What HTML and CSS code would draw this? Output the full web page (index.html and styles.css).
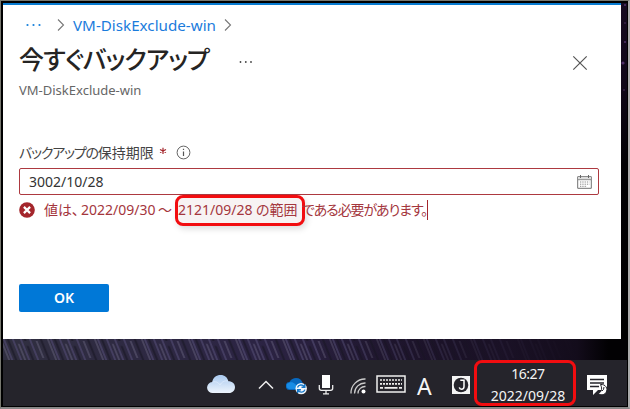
FILE: index.html
```html
<!DOCTYPE html>
<html lang="ja">
<head>
<meta charset="utf-8">
<title>今すぐバックアップ</title>
<link rel="stylesheet" href="styles.css">
</head>
<body>
<div class="screen">
  <div class="desktop">
    <main class="panel">
      <nav class="crumbs">
        <svg class="crumb-dots" width="16" height="4" viewBox="0 0 16 4"><g fill="#1680dc"><circle cx="1.5" cy="2" r="1.1"/><circle cx="7.5" cy="2" r="1.1"/><circle cx="13.5" cy="2" r="1.1"/></g></svg>
        <svg class="crumb-sep" width="8" height="14" viewBox="0 0 8 14"><path d="M1 1.5l5.5 5.5L1 12.5" fill="none" stroke="#777" stroke-width="1.1"/></svg>
        <a class="crumb-link">VM-DiskExclude-win</a>
        <svg width="8" height="14" viewBox="0 0 8 14"><path d="M1 1.5l5.5 5.5L1 12.5" fill="none" stroke="#777" stroke-width="1.1"/></svg>
      </nav>
      <header class="heading">
        <h1 class="title">今すぐバックアップ</h1>
        <svg class="more" width="14" height="4" viewBox="0 0 14 4"><g fill="#444"><circle cx="1.5" cy="2" r=".9"/><circle cx="6.8" cy="2" r=".9"/><circle cx="12" cy="2" r=".9"/></g></svg>
        <svg class="close" width="16" height="16" viewBox="0 0 16 16"><path d="M1.3 1.3l13.4 13.4M14.7 1.3L1.3 14.7" stroke="#555" stroke-width="1.2"/></svg>
      </header>
      <div class="subtitle">VM-DiskExclude-win</div>
      <div class="label">
        <span class="label-text"><span class="tight">バックアップの</span>保持期限</span>
        <svg class="required" width="8" height="8" viewBox="0 0 8 8"><path d="M4 .8v6.2M1 2.5l6 3M7 2.5l-6 3" stroke="#a4262c" stroke-width="1.2"/></svg>
        <svg class="info" width="15" height="15" viewBox="0 0 15 15"><circle cx="7.5" cy="7.5" r="6.4" fill="none" stroke="#666"/><path d="M7.5 6.5v4.4M7.5 3.8v1.3" stroke="#555" stroke-width="1.2"/></svg>
      </div>
      <div class="field">
        <span class="field-value">3002/10/28</span>
        <svg width="15" height="14" viewBox="0 0 15 14"><path d="M.7 1.7h13.6v11.6H.7z" fill="#fff" stroke="#707070"/><path d="M1 4.7h13" stroke="#888"/><path d="M1 2h13v2H1z" fill="#ddd"/><path d="M3.5 0v3M11.5 0v3" stroke="#666"/><path d="M3 7h9.5M3 9.2h9.5M3 11.3h7" stroke="#888" stroke-width="1" stroke-dasharray="1.3 1"/></svg>
      </div>
      <div class="error">
        <svg class="error-icon" width="16" height="16" viewBox="0 0 16 16"><circle cx="8" cy="8" r="7.8" fill="#a4262c"/><path d="M4.900 4.900l6.200 6.200M11.100 4.900l-6.200 6.200" stroke="#fff" stroke-width="2.2"/></svg>
        <span class="error-a">値は、</span><span class="error-b">2022/09/30</span><span class="error-tilde">～</span><span class="mark"><span class="error-c">2121/09/28</span><span class="error-d">の範囲</span></span><span class="error-e">である必要があります。</span><i class="caret"></i>
      </div>
      <button class="ok">OK</button>
    </main>
    <svg class="wallpaper" width="624" height="357" viewBox="0 0 624 357">
      <defs>
        <pattern id="fur" width="47" height="26" patternUnits="userSpaceOnUse" patternTransform="skewX(22)">
          <path d="M10 0v26M27 5v21M43 0v26" stroke="#191724" stroke-width="2.5" opacity=".6"/>
          <path d="M3 0v26M19 3v20M38 0v17" stroke="#817b98" stroke-width=".9" opacity=".7"/>
          <path d="M6 0v26M15 0v26M32 0v26M23 0v26" stroke="#4c456c" stroke-width="2" opacity=".7"/>
        </pattern>
        <linearGradient id="base"><stop offset="0" stop-color="#302f40"/><stop offset=".4" stop-color="#2c2444"/><stop offset=".72" stop-color="#1e142c"/><stop offset=".93" stop-color="#150e1d"/><stop offset="1" stop-color="#020103"/></linearGradient>
        <linearGradient id="dim"><stop offset=".5" stop-color="#160f20" stop-opacity="0"/><stop offset=".8" stop-color="#1a1126" stop-opacity=".8"/><stop offset=".92" stop-color="#130c1b"/><stop offset=".97" stop-color="#020103"/></linearGradient>
        <linearGradient id="side" x2="0" y2="1"><stop offset="0" stop-color="#160a20"/><stop offset=".25" stop-color="#100718"/><stop offset=".48" stop-color="#020104"/><stop offset="1" stop-color="#000"/></linearGradient>
      </defs>
      <rect x="618" width="6" height="337" fill="url(#side)"/>
      <g fill="#503068"><circle cx="622" cy="2" r="1"/><circle cx="622" cy="39" r="1"/><circle cx="620" cy="60" r="1.6"/><circle cx="621" cy="87" r=".8"/><circle cx="622" cy="20" r=".8"/></g>
      <rect y="336" width="624" height="21" fill="url(#base)"/>
      <rect y="336" width="624" height="21" fill="url(#fur)"/>
      <rect y="336" width="624" height="21" fill="url(#dim)"/>
    </svg>
  </div>
  <footer class="taskbar">
    <svg class="cloud" width="28" height="20" viewBox="0 0 28 20"><defs><linearGradient id="cl" x2="0" y2="1"><stop stop-color="#a9c9ef"/><stop offset="1" stop-color="#edf4fc"/></linearGradient></defs><path d="M6 19a5.500 5.500 0 0 1-.8-11C6 3.500 9.500 1 13.500 1c4.300 0 7 2.500 7.800 6.200C25.500 7.200 28 9.800 28 13c0 3.500-2.500 6-6 6z" fill="url(#cl)"/><path d="M5.500 8c3-1 6 .5 7.500 3 1.500-3 5-5 8.300-3.800" fill="none" stroke="#e8f2ff" stroke-width="1" opacity=".6"/></svg>
    <svg class="chevron" width="16" height="10" viewBox="0 0 16 10"><path d="M1 8.500L8 1.500l7 7" fill="none" stroke="#eee" stroke-width="1.5"/></svg>
    <svg class="onedrive" width="22" height="18" viewBox="0 0 22 18"><path d="M4 13a4 4 0 0 1-.5-8C5 2 7.500 1 10 1c3.500 0 5.500 2 6.500 4.500L18 9 9 13z" fill="#0868be"/><path d="M1 7c3-2.500 6-2 8 0l6 5H4C1 12 0 9.500 1 7z" fill="#188ce5"/><circle cx="15.200" cy="11.600" r="5.700" fill="#f4f8fc"/><path d="M11.500 10.500c1-3 5-3.400 7-.8M18.800 7v3.300h-3.300M18.900 12.600c-1 3-5 3.400-7 .8M11.600 16v-3.300h3.300" fill="none" stroke="#1678c9" stroke-width="1.400"/></svg>
    <svg class="mic" width="16" height="21" viewBox="0 0 16 21"><path d="M4 1h8v13H4z" fill="#fff"/><path d="M1.300 11v3.300q0 2 2 2h9.400q2 0 2-2V11M8 16v3.500M5 19.800h6" fill="none" stroke="#eee" stroke-width="1.300"/></svg>
    <svg class="wifi" width="17" height="16" viewBox="0 0 17 16"><g fill="none" stroke="#ccc" stroke-width="1.300"><path d="M1 15.500A14 14 0 0 1 15.500 1M4.500 15.500A10.500 10.500 0 0 1 15.500 5M8 15.500A7 7 0 0 1 15.500 8.500"/></g><circle cx="13.500" cy="13.500" r="2" fill="#fff"/></svg>
    <svg class="keyboard" width="30" height="18" viewBox="0 0 30 18"><path d="M1 1h28v16H1z" fill="none" stroke="#f0f0f0" stroke-width="1.500"/><path d="M4 5h22M4 8.800h22" stroke="#eee" stroke-width="1.700" stroke-dasharray="2 1"/><path d="M4 12.800h3M8.500 12.800h13M23 12.800h3" stroke="#eee" stroke-width="1.700"/></svg>
    <span class="ime">A</span>
    <svg class="jmode" width="18" height="18" viewBox="0 0 18 18"><path d="M0 0h18v18H0z" fill="#f4f4f4"/><circle cx="9" cy="9" r="7.300" fill="#25242b"/><path d="M8.300 4.300h3.700v6.300q0 2.600-2.400 2.600-2 0-2.300-1.800" fill="none" stroke="#fff" stroke-width="1.500"/></svg>
    <div class="clock"><span class="time">16:27</span><span class="date">2022/09/28</span></div>
    <svg class="notice" width="22" height="21" viewBox="0 0 22 21"><path d="M1 0h20v15h-9l-5 5v-5H1z" fill="#fff"/><path d="M4 4.500h14M4 8h14M4 11.500h9" stroke="#25242b" stroke-width="1.300"/><path d="M14.500 9.500c5-.5 8 4 5.500 8-2 3-6 3-8 .5 3-.2 5-3.500 2.500-8.500z" fill="#fff" stroke="#25242b" stroke-width="1"/><path d="M16 16q2-1 2-4" fill="none" stroke="#25242b"/></svg>
  </footer>
</div>
</body>
</html>
```
FILE: styles.css
```css
* { box-sizing: border-box; }
body { margin: 0; background: #85857c; }
svg { display: block; flex: none; }
span, a, h1 { white-space: nowrap; flex: none; }
.screen {
  width: 630px; height: 409px; overflow: hidden;
  background: #000; border: 1px solid #77786f; border-right: 2px solid #aaa; border-bottom: 2px solid #888;
  padding: 2px 1px 0 2px;
  font-family: "Noto Sans", "Noto Sans CJK JP", sans-serif;
  display: flex; flex-direction: column;
}
.desktop { position: relative; height: 357px; flex: none; width: 624px; }
.wallpaper { position: absolute; left: 0; top: 0; z-index: 0; }
.panel {
  position: relative; z-index: 1; width: 618px; height: 336px; background: #fff;
  border-top: 2px solid #087bd0; padding: 10px 0 0 16px; display: flex; flex-direction: column;
}
.crumbs { height: 20px; display: flex; align-items: center; padding-left: 7px; }
.crumb-sep { margin: 0 7px 0 15px; }
.crumb-link { width: 144px; margin-right: 7px; font-size: 15.200px; line-height: 20px; color: #1a7bdc; margin-left: 1px; }
.heading { height: 46px; display: flex; align-items: center; }
.title { margin: 0; width: 191px; font: 500 25px/46px "Noto Sans CJK JP", sans-serif; font-feature-settings: "palt"; letter-spacing: -.9px; color: #252423; }
.more { margin: 8px 0 0 29px; }
.close { margin: 9px 0 0 319px; }
.subtitle { height: 20px; font-size: 13px; line-height: 19px; color: #666; }
.label { height: 20px; margin-top: 41px; display: flex; align-items: center; }
.label-text { width: 134px; font: 14px/20px "Noto Sans CJK JP", sans-serif; font-feature-settings: "palt"; color: #444; }
.tight { letter-spacing: -1.200px; }
.required { margin-left: 6px; margin-top: -2px; }
.info { margin-left: 9px; }
.field { width: 580px; height: 27px; margin-top: 6px; flex: none; border: 1px solid #ad3940; border-radius: 2px; display: flex; align-items: center; justify-content: space-between; padding: 0 6px 0 9px; }
.field-value { font-size: 14px; color: #333; }
.error { height: 30px; display: flex; align-items: center; color: #a4363d; font-size: 14px; line-height: 20px; font-feature-settings: "palt"; }
.error-icon { margin-right: 9px; }
.error-a { width: 37px; }
.error-b { width: 77px; }
.error-tilde { width: 19px; }
.mark { width: 130px; height: 31px; border: 3px solid #f20d10; border-radius: 8px; background: #f7f3f3; display: flex; align-items: center; box-shadow: 2px 3px 6px #0002; margin-left: -2px; }
.error-c { width: 78px; }
.error-e { margin-left: -3px; width: 125px; letter-spacing: -1.100px; }
.caret { width: 1px; height: 20px; background: #a4262c; }
.ok { width: 90px; height: 28px; margin-top: 59px; padding: 0; flex: none; border: 0; border-radius: 2px; background: #0078d7; color: #fff; font: 600 14px/28px "Noto Sans", sans-serif; }
.taskbar { height: 46px; flex: none; background: #25242b; display: flex; padding-left: 204px; }
.cloud { margin-top: 14px; }
.chevron { margin: 20px 0 0 23px; }
.onedrive { margin: 17px 0 0 12px; }
.mic { margin: 14px 0 0 10px; }
.wifi { margin: 18px 0 0 16px; }
.keyboard { margin: 15px 0 0 9px; }
.ime { width: 18px; margin: 13px 0 0 11px; font: 23px/26px "Noto Sans", sans-serif; color: #f5f5f5; }
.jmode { margin: 16px 0 0 17px; }
.clock { width: 102px; height: 46px; margin-left: 4px; flex: none; border: 3px solid #f20d10; border-radius: 8px; display: flex; flex-direction: column; align-items: center; color: #f5f5f5; font-size: 14px; padding-left: 6px; }
.time { line-height: 22px; letter-spacing: -.5px; }
.date { line-height: 22px; }
.notice { margin: 15px 0 0 10px; }
```
